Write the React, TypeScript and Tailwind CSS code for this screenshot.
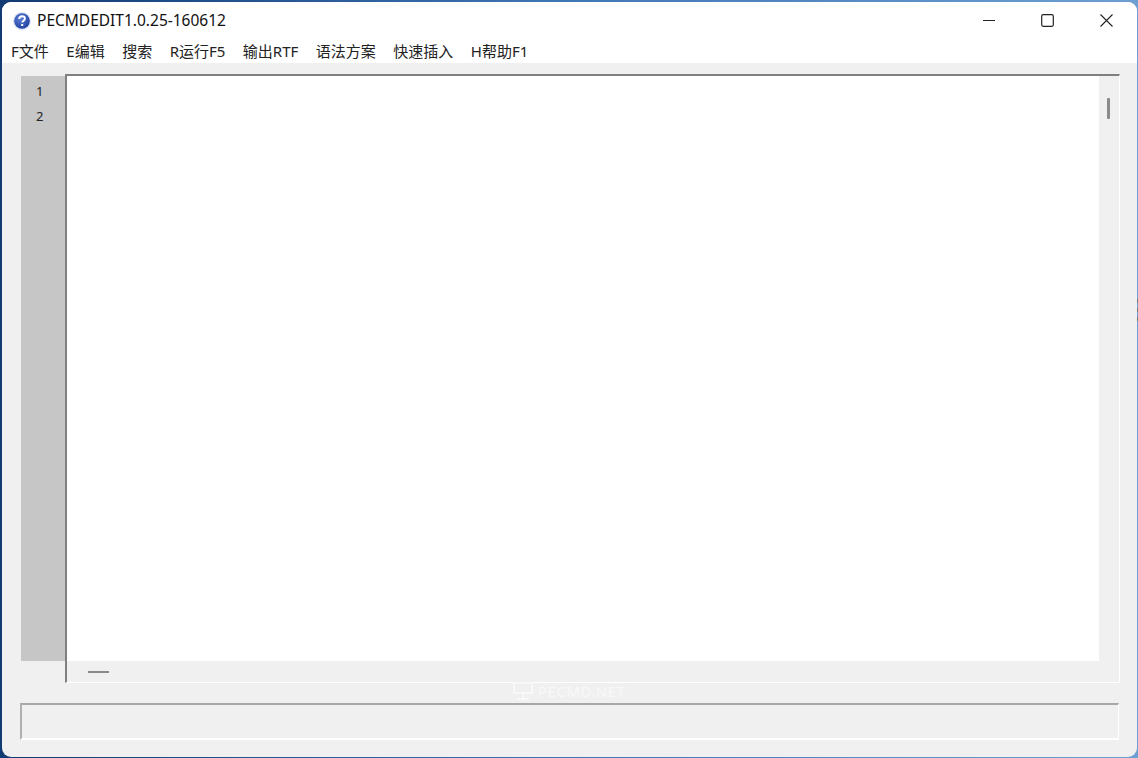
const menus = ['F文件', 'E编辑', '搜索', 'R运行F5', '输出RTF', '语法方案', '快速插入', 'H帮助F1']

function HelpIcon() {
  return (
    <svg width="20" height="20" viewBox="0 0 20 20" className="shrink-0">
      <defs>
        <radialGradient id="help" cx="40%" cy="35%" r="70%">
          <stop offset="0%" stopColor="#5b7fd8" />
          <stop offset="100%" stopColor="#1f3f9e" />
        </radialGradient>
      </defs>
      <circle cx="10" cy="10" r="9.2" fill="#dfe6f5" />
      <circle cx="10" cy="10" r="7.8" fill="url(#help)" />
      <path d="M7.2 7.9c0-1.7 1.3-2.6 2.9-2.6s2.8.9 2.8 2.3c0 1.2-.7 1.8-1.6 2.4-.7.5-1 .8-1 1.6" fill="none" stroke="#fff" strokeWidth="1.9" />
      <rect x="9.2" y="13" width="2" height="2" fill="#fff" />
    </svg>
  )
}

function WindowButtons() {
  return (
    <div className="flex items-center gap-[42px] pr-[22px]">
      <svg width="17" height="17" viewBox="0 0 17 17">
        <path d="M3 8.5h12" stroke="#222" strokeWidth="1" />
      </svg>
      <svg width="17" height="17" viewBox="0 0 17 17">
        <rect x="2.7" y="2.7" width="11.6" height="11.6" rx="1.5" fill="none" stroke="#222" strokeWidth="1.2" />
      </svg>
      <svg width="17" height="17" viewBox="0 0 17 17">
        <path d="M2.5 2.5l12 12M14.5 2.5l-12 12" stroke="#222" strokeWidth="1.1" />
      </svg>
    </div>
  )
}

export default function App() {
  return (
    <div className="relative h-[758px] w-[1138px] overflow-hidden bg-gradient-to-r from-[#123a73] via-[#3f77b5] to-[#6d9fd2] pl-[2px] pt-[2px] font-['Noto_Sans','Noto_Sans_CJK_SC',sans-serif]">
      <div className="flex h-[755px] w-[1135px] flex-col overflow-hidden rounded-[9px] bg-[#f0f0f0]">
        <div className="flex h-[37px] shrink-0 items-center justify-between bg-white pl-[10px]">
          <div className="flex items-center gap-[5px]">
            <HelpIcon />
            <span className="text-[15.5px] text-[#111]">PECMDEDIT1.0.25-160612</span>
          </div>
          <WindowButtons />
        </div>
        <div className="flex h-[24px] shrink-0 items-center gap-[17.5px] bg-white pl-[9px] text-[15px] text-[#222]">
          {menus.map((m) => (
            <span key={m}>{m}</span>
          ))}
        </div>

        <div className="flex flex-1 flex-col pl-[18px] pr-[17px] pt-[11px]">
          <div className="ml-[1px] flex h-[609px]">
            <div className="mt-[2px] flex h-[585px] w-[44px] shrink-0 flex-col items-start bg-[#c6c6c6] pl-[15px] pt-[3px] text-[13px] leading-[25px] text-[#222]">
              <span>1</span>
              <span>2</span>
            </div>
            <div className="flex flex-1 flex-col border-b border-r border-l-2 border-t-2 border-b-white border-l-[#808080] border-r-white border-t-[#808080]">
              <div className="flex h-[585px]">
                <div className="flex-1 bg-white" />
                <div className="w-[20px] pl-[8px] pt-[22px]">
                  <div className="h-[21px] w-[3px] rounded-[1px] bg-[#8a8a8a]" />
                </div>
              </div>
              <div className="pl-[21px] pt-[10px]">
                <div className="h-[2px] w-[21px] bg-[#8a8a8a]" />
              </div>
            </div>
          </div>
          <div className="mt-[20px] h-[37px] w-[1099px] border-b-2 border-r border-l-2 border-t-2 border-b-white border-l-[#b0b0b0] border-r-white border-t-[#a8a8a8]" />
        </div>
      </div>

      <div className="absolute left-[511px] top-[680px] flex items-center gap-[3px] text-[15px] tracking-[0.5px] text-[#f8f8f8]">
        <svg width="24" height="20" viewBox="0 0 24 20">
          <path d="M3 2h18v10H3zM12 12v5M6 18h12" fill="none" stroke="#f8f8f8" strokeWidth="2" />
        </svg>
        <span>PECMD.NET</span>
      </div>

      <div className="absolute right-0 top-[299px] flex w-[1px] flex-col gap-[5px]">
        <div className="h-[4px] bg-[#777]" />
        <div className="h-[4px] bg-[#777]" />
        <div className="h-[4px] bg-[#777]" />
      </div>
    </div>
  )
}
